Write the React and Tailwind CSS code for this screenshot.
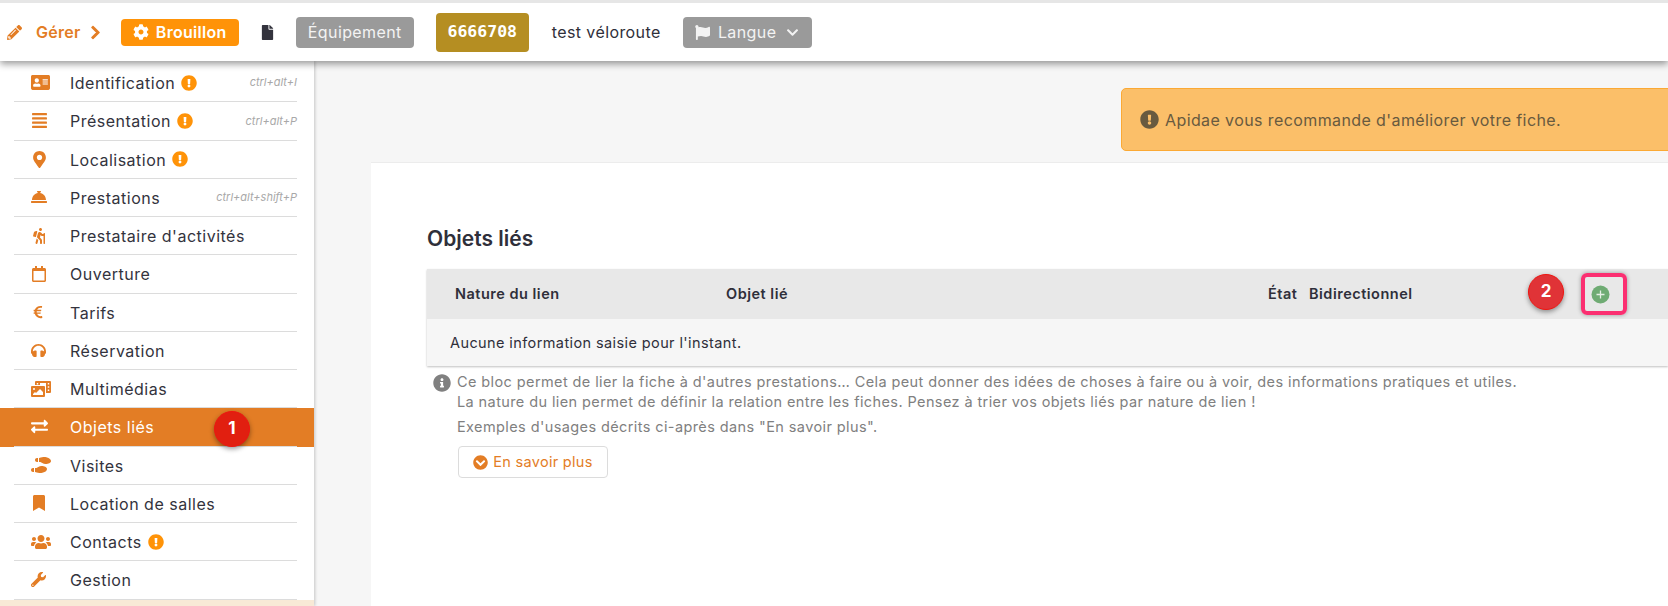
import {
  FaPencilAlt,
  FaChevronRight,
  FaChevronDown,
  FaCog,
  FaFile,
  FaFlag,
  FaAddressCard,
  FaAlignJustify,
  FaMapMarkerAlt,
  FaConciergeBell,
  FaHiking,
  FaRegCalendar,
  FaEuroSign,
  FaHeadphones,
  FaPhotoVideo,
  FaExchangeAlt,
  FaShoePrints,
  FaBookmark,
  FaUsers,
  FaWrench,
  FaExclamationCircle,
  FaInfoCircle,
  FaChevronCircleDown,
} from "react-icons/fa";

const menuItems = [
  { label: "Identification", Icon: FaAddressCard, iconSize: 19, warn: true, shortcut: "ctrl+alt+I" },
  { label: "Présentation", Icon: FaAlignJustify, iconSize: 17, warn: true, shortcut: "ctrl+alt+P" },
  { label: "Localisation", Icon: FaMapMarkerAlt, iconSize: 17, warn: true },
  { label: "Prestations", Icon: FaConciergeBell, iconSize: 16, shortcut: "ctrl+alt+shift+P" },
  { label: "Prestataire d'activités", Icon: FaHiking, iconSize: 16 },
  { label: "Ouverture", Icon: FaRegCalendar, iconSize: 16 },
  { label: "Tarifs", Icon: FaEuroSign, iconSize: 14 },
  { label: "Réservation", Icon: FaHeadphones, iconSize: 15 },
  { label: "Multimédias", Icon: FaPhotoVideo, iconSize: 20 },
  { label: "Objets liés", Icon: FaExchangeAlt, iconSize: 17, active: true },
  { label: "Visites", Icon: FaShoePrints, iconSize: 20 },
  { label: "Location de salles", Icon: FaBookmark, iconSize: 16 },
  { label: "Contacts", Icon: FaUsers, iconSize: 20, warn: true },
  { label: "Gestion", Icon: FaWrench, iconSize: 15 },
];

function MenuRow({ item }) {
  const { label, Icon, iconSize, warn, shortcut, active } = item;

  return (
    <div className={`h-[38.25px] ${active ? "bg-[#e37d25]" : ""}`}>
      <div className="ml-[14px] mr-[17px] h-full flex items-center border-b border-[#dcdcdc]">
        <span className={`w-[56px] pl-[17px] flex items-center ${active ? "text-white" : "text-[#e37d25]"}`}>
          <Icon size={iconSize} />
        </span>
        <span className={`pt-[1px] text-[16px] tracking-[0.5px] ${active ? "text-white" : "text-[#33333d]"}`}>{label}</span>
        {warn && <FaExclamationCircle size={16} className="ml-[6px] text-[#ff9308]" />}
        {shortcut && <span className="ml-auto text-[11px] italic text-[#a8a8a8]">{shortcut}</span>}
      </div>
    </div>
  );
}

function Marker({ children, className }) {
  return (
    <div
      className={`absolute w-[36px] h-[36px] rounded-full border border-[#f01510] flex items-center justify-center text-white font-bold text-[17px] shadow-[0_2px_5px_rgba(0,0,0,0.4)] ${className}`}
    >
      {children}
    </div>
  );
}

export default function App() {
  return (
    <div className="relative w-full h-[606px] overflow-hidden flex flex-col bg-[#f6f6f6] font-['Inter',sans-serif] text-[#2f2f3a]">
      <header className="relative z-20 h-[61px] shrink-0 bg-white border-t-[3px] border-[#e6e6e6] shadow-[0_3px_7px_rgba(0,0,0,0.4)] flex items-center pl-[7px]">
        <FaPencilAlt size={15} className="text-[#e37d25]" />
        <span className="ml-[14px] font-semibold text-[16px] tracking-[0.3px] text-[#e37d25]">Gérer</span>
        <FaChevronRight size={15} strokeWidth={30} stroke="currentColor" className="ml-[7px] text-[#e37d25]" />
        <span className="ml-[18px] w-[118px] h-[27px] rounded bg-[#ff9308] text-white font-semibold text-[16px] tracking-[0.3px] flex items-center justify-center gap-[7px]">
          <FaCog size={16} />
          Brouillon
        </span>
        <FaFile size={15} className="ml-[21px] text-[#33333d]" />
        <span className="ml-[21px] w-[118px] h-[31px] rounded bg-[#9a9a9a] text-[#f3f3f3] text-[16px] tracking-[0.4px] flex items-center justify-center">Équipement</span>
        <span className="ml-[22px] w-[93px] h-[39px] rounded bg-[#b58e22] text-white font-bold text-[16.5px] font-['DejaVu_Sans_Mono',monospace] flex items-center justify-center">6666708</span>
        <span className="ml-[23px] text-[16px] tracking-[0.4px]">test véloroute</span>
        <span className="ml-[22px] w-[129px] h-[31px] rounded bg-[#9a9a9a] text-[#f3f3f3] text-[16px] tracking-[0.4px] flex items-center justify-center gap-[8px]">
          <FaFlag size={15} />
          Langue
          <FaChevronDown size={13} className="ml-[2px]" />
        </span>
      </header>

      <div className="flex flex-1 min-h-0">
        <aside className="relative z-10 w-[314px] shrink-0 bg-white shadow-[1px_0_3px_rgba(0,0,0,0.2)] flex flex-col">
          <div className="pt-[3px]">
            {menuItems.map((item) => (
              <MenuRow key={item.label} item={item} />
            ))}
          </div>
          <div className="flex-1 bg-[#f8e9d6]" />
        </aside>

        <main className="flex-1 min-w-0 pl-[57px] pt-[27px]">
          <div className="ml-[750px] w-[800px] h-[63px] rounded-[5px] border border-[#fba934] bg-[#fbbf69] text-[#685a3f] text-[16px] tracking-[0.4px] flex items-center pl-[18px] gap-[6px]">
            <FaExclamationCircle size={19} className="text-[#685a3f]" />
            Apidae vous recommande d'améliorer votre fiche.
          </div>

          <section className="mt-[11px] h-[500px] bg-white border-t border-[#ececec] pl-[56px] pt-[64px]">
            <h2 className="font-semibold text-[21px] leading-[24px]">Objets liés</h2>

            <div className="mt-[18px] shadow-[0_1px_2px_rgba(0,0,0,0.25)]">
              <div className="h-[50px] bg-[#e8e8e8] grid grid-cols-[271px_542px_41px_1fr] items-center font-semibold text-[14.5px] tracking-[0.5px] pl-[28px]">
                <span>Nature du lien</span>
                <span>Objet lié</span>
                <span>État</span>
                <span>Bidirectionnel</span>
              </div>
              <div className="h-[47px] bg-[#f6f6f6] flex items-center pl-[23px] text-[14.5px] tracking-[0.4px]">
                Aucune information saisie pour l'instant.
              </div>
            </div>

            <div className="mt-[6px] ml-[6px] flex gap-[6px] text-[14.5px] tracking-[0.4px] text-[#808080]">
              <FaInfoCircle size={18} className="mt-[2px] shrink-0 text-[#808080]" />
              <div>
                <p className="leading-[20px]">
                  Ce bloc permet de lier la fiche à d'autres prestations… Cela peut donner des idées de choses à faire ou à voir, des informations pratiques et utiles.
                </p>
                <p className="leading-[20px]">
                  La nature du lien permet de définir la relation entre les fiches. Pensez à trier vos objets liés par nature de lien !
                </p>
                <p className="mt-[5px] leading-[20px]">Exemples d'usages décrits ci-après dans "En savoir plus".</p>
                <button className="mt-[9px] ml-[1px] w-[150px] h-[32px] rounded border border-[#dcdcdc] bg-white text-[#e37d25] text-[14.5px] tracking-[0.3px] flex items-center justify-center gap-[5px]">
                  <FaChevronCircleDown size={15} />
                  En savoir plus
                </button>
              </div>
            </div>
          </section>
        </main>
      </div>

      <Marker className="z-30 left-[214px] top-[411px] bg-[#e11f10]">1</Marker>
      <Marker className="z-30 left-[1528px] top-[274px] bg-[#e03337]">2</Marker>
      <div className="absolute z-30 left-[1581px] top-[273px] w-[46px] h-[42px] rounded-[6px] border-[4px] border-[#fb2f71] shadow-[0_0_4px_rgba(0,0,0,0.35)] flex items-center pl-[6px]">
        <svg width="19" height="19" viewBox="0 0 19 19">
          <circle cx="9.5" cy="9.5" r="9" fill="#6fab73" />
          <path d="M9.5 5.5v8M5.5 9.5h8" stroke="#e4efe4" strokeWidth="1.3" />
        </svg>
      </div>
    </div>
  );
}
